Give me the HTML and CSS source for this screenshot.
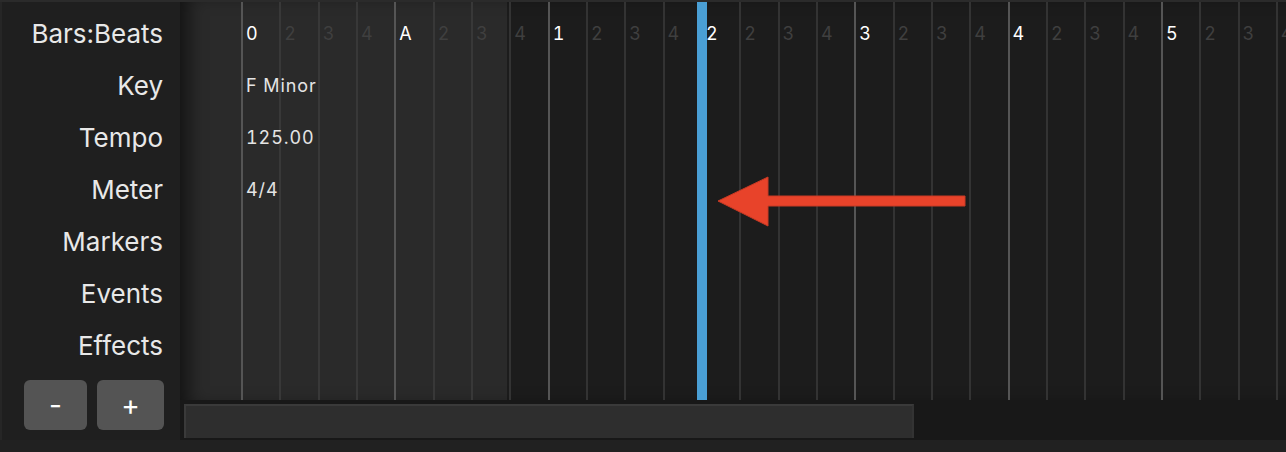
FILE: index.html
```html
<!DOCTYPE html>
<html lang="en">
<head>
  <meta charset="UTF-8">
  <meta name="viewport" content="width=device-width, initial-scale=1.0">
  <title>Global Tracks</title>
  <link rel="stylesheet" href="styles.css">
</head>
<body>
<div class="app">
  <div class="sidebar">
    <div class="track-names">
      <div class="track-name">Bars:Beats</div>
      <div class="track-name">Key</div>
      <div class="track-name">Tempo</div>
      <div class="track-name">Meter</div>
      <div class="track-name">Markers</div>
      <div class="track-name">Events</div>
      <div class="track-name">Effects</div>
    </div>
    <div class="zoom-buttons">
      <button type="button" class="zoom-btn zoom-out">-</button>
      <button type="button" class="zoom-btn zoom-in">+</button>
    </div>
  </div>

  <div class="main">
    <div class="timeline">
      <div class="lanes">
        <div class="beat bar pre">0</div>
        <div class="beat pre">2</div>
        <div class="beat pre">3</div>
        <div class="beat pre">4</div>
        <div class="beat bar pre">A</div>
        <div class="beat pre">2</div>
        <div class="beat pre">3</div>
        <div class="beat">4</div>
        <div class="beat bar">1</div>
        <div class="beat">2</div>
        <div class="beat">3</div>
        <div class="beat">4</div>
        <div class="beat bar">2</div>
        <div class="beat">2</div>
        <div class="beat">3</div>
        <div class="beat">4</div>
        <div class="beat bar">3</div>
        <div class="beat">2</div>
        <div class="beat">3</div>
        <div class="beat">4</div>
        <div class="beat bar">4</div>
        <div class="beat">2</div>
        <div class="beat">3</div>
        <div class="beat">4</div>
        <div class="beat bar">5</div>
        <div class="beat">2</div>
        <div class="beat">3</div>
        <div class="beat">4</div>
      </div>

      <div class="track-values">
        <div class="track-value">F Minor</div>
        <div class="track-value">125.00</div>
        <div class="track-value">4/4</div>
      </div>

      <div class="playhead"></div>

      <svg class="arrow" width="250" height="52" viewBox="0 0 250 52">
        <polygon points="1,25 51,1 51,20 248,20 248,30 51,30 51,50" fill="#e8432a" stroke="#c93a24" stroke-width="1"/>
      </svg>
    </div>

    <div class="scrollbar">
      <div class="scroll-thumb"></div>
    </div>
  </div>
</div>
<div class="footer"></div>
</body>
</html>
```

FILE: styles.css
```css
body {
  margin: 0;
  background-color: #212121;
  font-family: Inter, "Noto Sans", sans-serif;
  color: #e8e8e8;
  overflow: hidden;
}

.app {
  display: flex;
  height: 440px;
  border-top: 2px solid #2b2b2b;
  box-sizing: border-box;
}

/* Left column with track names */
.sidebar {
  width: 180px;
  flex: none;
  box-sizing: border-box;
  border-left: 2px solid #262626;
  background-color: #1f1f1f;
  padding-top: 6px;
}

.track-name {
  height: 52px;
  line-height: 52px;
  font-size: 26px;
  text-align: right;
  padding-right: 17px;
}

.zoom-buttons {
  display: flex;
  justify-content: flex-end;
  gap: 10px;
  padding-right: 16px;
  margin-top: 8px;
}

.zoom-btn {
  height: 50px;
  padding: 0;
  background-color: #545454;
  color: #ffffff;
  border: none;
  border-radius: 6px;
  font-family: Inter, "Noto Sans", sans-serif;
  font-size: 28px;
  cursor: pointer;
}

.zoom-out {
  width: 63px;
}

.zoom-in {
  width: 67px;
}

/* Timeline */
.main {
  flex: 1;
  display: flex;
  flex-direction: column;
  min-width: 0;
}

.timeline {
  flex: 1;
  display: grid;
  position: relative;
  overflow: hidden;
  background: linear-gradient(to right, #2a2a2a 327px, #1c1c1c 327px);
  box-shadow: inset 16px 0 18px -8px rgba(0, 0, 0, 0.55);
}

.lanes {
  grid-area: 1 / 1;
  display: flex;
  padding-left: 61px;
}

.beat {
  flex: none;
  width: 38.333px;
  box-sizing: border-box;
  border-left: 2px solid #333333;
  padding: 6px 0 0 3px;
  line-height: 51px;
  font-size: 18px;
  font-variant-numeric: tabular-nums;
  color: #3f3f3f;
}

.beat.pre {
  border-left-color: #383838;
}

.beat.bar {
  border-left-color: #555555;
  color: #ffffff;
}

.track-values {
  grid-area: 1 / 1;
  padding: 58px 0 0 66px;
  font-size: 18px;
  font-variant-numeric: tabular-nums;
  letter-spacing: 0.9px;
  color: #e4e4e4;
}

.track-value {
  height: 52px;
  line-height: 52px;
}

.playhead {
  position: absolute;
  top: -1px;
  bottom: 0;
  left: 517px;
  width: 10px;
  background-color: #4a9fd5;
}

.arrow {
  position: absolute;
  left: 537px;
  top: 174px;
}

/* Horizontal scrollbar */
.scrollbar {
  height: 40px;
  flex: none;
  background-color: #181818;
  padding: 4px 0 2px 4px;
  box-sizing: border-box;
}

.scroll-thumb {
  width: 730px;
  height: 100%;
  box-sizing: border-box;
  background-color: #2e2e2e;
  border-top: 2px solid #3a3a3a;
  border-left: 2px solid #3a3a3a;
  border-right: 2px solid #333333;
}

.footer {
  height: 12px;
}
```
